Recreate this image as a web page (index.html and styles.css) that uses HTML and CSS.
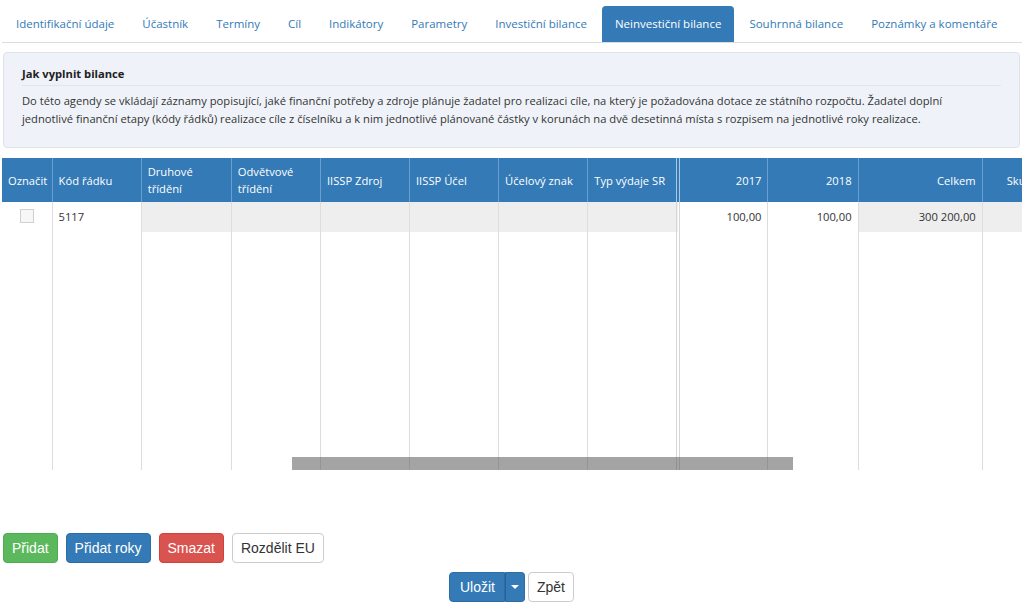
FILE: index.html
```html
<!DOCTYPE html>
<html lang="cs">
<head>
<meta charset="utf-8">
<title>Neinvestiční bilance</title>
<link rel="stylesheet" href="styles.css">
</head>
<body>
<div class="page">
  <ul class="tabs">
    <li><a href="#">Identifikační údaje</a></li>
    <li><a href="#">Účastník</a></li>
    <li><a href="#">Termíny</a></li>
    <li><a href="#">Cíl</a></li>
    <li><a href="#">Indikátory</a></li>
    <li><a href="#">Parametry</a></li>
    <li><a href="#">Investiční bilance</a></li>
    <li class="active"><a href="#">Neinvestiční bilance</a></li>
    <li><a href="#">Souhrnná bilance</a></li>
    <li><a href="#">Poznámky a komentáře</a></li>
  </ul>

  <div class="info">
    <h4 class="info-title">Jak vyplnit bilance</h4>
    <p class="info-text">Do této agendy se vkládají záznamy popisující, jaké finanční potřeby a zdroje plánuje žadatel pro realizaci cíle, na který je požadována dotace ze státního rozpočtu. Žadatel doplní jednotlivé finanční etapy (kódy řádků) realizace cíle z číselníku a k nim jednotlivé plánované částky v korunách na dvě desetinná místa s rozpisem na jednotlivé roky realizace.</p>
  </div>

  <div class="grid-wrap">
    <table class="grid">
      <colgroup>
        <col class="c-check">
        <col class="c-std">
        <col class="c-wide">
        <col class="c-std">
        <col class="c-std">
        <col class="c-std">
        <col class="c-std">
        <col class="c-frozen">
        <col class="c-wide">
        <col class="c-wide">
        <col class="c-total">
        <col class="c-rest">
      </colgroup>
      <thead>
        <tr>
          <th>Označit</th>
          <th>Kód řádku</th>
          <th>Druhové třídění</th>
          <th>Odvětvové třídění</th>
          <th>IISSP Zdroj</th>
          <th>IISSP Účel</th>
          <th>Účelový znak</th>
          <th class="frozen-end">Typ výdaje SR</th>
          <th class="num">2017</th>
          <th class="num">2018</th>
          <th class="num">Celkem</th>
          <th class="last">Skutečnost</th>
        </tr>
      </thead>
      <tbody>
        <tr class="data-row">
          <td class="center"><span class="checkbox"></span></td>
          <td>5117</td>
          <td class="ro"></td>
          <td class="ro"></td>
          <td class="ro"></td>
          <td class="ro"></td>
          <td class="ro"></td>
          <td class="ro frozen-end"></td>
          <td class="num">100,00</td>
          <td class="num">100,00</td>
          <td class="num ro">300 200,00</td>
          <td class="ro"></td>
        </tr>
        <tr class="filler">
          <td></td><td></td><td></td><td></td><td></td><td></td><td></td>
          <td class="frozen-end"></td><td></td><td></td><td></td><td></td>
        </tr>
      </tbody>
    </table>
    <div class="scroll-thumb"></div>
  </div>

  <div class="actions">
    <button class="btn btn-success">Přidat</button>
    <button class="btn btn-primary">Přidat roky</button>
    <button class="btn btn-danger">Smazat</button>
    <button class="btn btn-default">Rozdělit EU</button>
  </div>

  <div class="save-row">
    <div class="btn-group">
      <button class="btn btn-primary btn-main">Uložit</button>
      <button class="btn btn-primary btn-caret"><span class="caret"></span></button>
    </div>
    <button class="btn btn-default">Zpět</button>
  </div>
</div>
</body>
</html>
```
FILE: styles.css
```css
* { box-sizing: border-box; }

html, body {
  margin: 0;
  padding: 0;
  background: #fff;
}

body {
  font-family: "Open Sans", "Segoe UI", Arial, sans-serif;
  font-size: 11.2px;
  color: #333;
}

.page {
  padding: 6px 2px 0 2px;
  width: 1024px;
  overflow: hidden;
}

/* Tabs */
.tabs {
  list-style: none;
  margin: 0;
  padding: 0;
  display: flex;
  border-bottom: 1px solid #dddddd;
  height: 37px;
}
.tabs li {
  margin-right: 2px;
}
.tabs a {
  display: block;
  padding: 10px 13px;
  line-height: 16px;
  font-size: 11.5px;
  color: #337ab7;
  text-decoration: none;
  border-radius: 4px 4px 0 0;
  white-space: nowrap;
}
.tabs li:first-child a {
  padding-left: 14px;
}
.tabs li.active a {
  background: #337ab7;
  color: #fff;
}

/* Info panel */
.info {
  margin: 9px 2px 0 1px;
  background: #eff3f9;
  border: 1px solid #dde3eb;
  border-radius: 4px;
  padding: 12px 18px 19px 18px;
}
.info-title {
  margin: 0;
  font-size: 11.2px;
  font-weight: 700;
  line-height: 17px;
  padding-bottom: 3px;
  border-bottom: 1px solid #e1e6ec;
  color: #222;
}
.info-text {
  margin: 6px 0 0 0;
  line-height: 18px;
  padding-right: 30px;
}

/* Grid */
.grid-wrap {
  position: relative;
  margin-top: 10px;
  overflow: hidden;
  height: 312px;
}
.grid {
  border-collapse: collapse;
  table-layout: fixed;
  width: 1131px;
}
.c-check { width: 50px; }
.c-std { width: 89px; }
.c-frozen { width: 90px; }
.c-wide { width: 90px; }
.c-total { width: 124px; }
.c-rest { width: 150px; }

.grid th {
  background: #337ab7;
  color: #fff;
  font-weight: 400;
  text-align: left;
  vertical-align: middle;
  height: 44px;
  padding: 0 6px;
  line-height: 17px;
  border-right: 1px solid #6b9fd0;
}
.grid th.last {
  padding-left: 24px;
}
.grid th.num,
.grid td.num {
  text-align: right;
}
.grid th.frozen-end {
  border-right: 4px double #a9c7e5;
}
.grid td.frozen-end {
  border-right: 4px double #d6d6d6;
}
.grid td {
  height: 30px;
  padding: 0 6px;
  line-height: 16px;
  border-right: 1px solid #dddddd;
  color: #333;
}
.grid td.ro {
  background: #eeeeee;
}
.grid td.center {
  text-align: center;
}
.grid .filler td {
  height: 238px;
}
.checkbox {
  display: inline-block;
  width: 14px;
  height: 14px;
  border: 1px solid #cfcfcf;
  background: #f7f7f7;
  vertical-align: middle;
  margin-top: -4px;
}

.scroll-thumb {
  position: absolute;
  left: 290px;
  width: 501px;
  top: 299px;
  height: 13px;
  background: rgba(90, 90, 90, 0.55);
}

/* Buttons */
.btn {
  font-family: "Liberation Sans", Arial, sans-serif;
  font-size: 14px;
  height: 30px;
  line-height: 28px;
  padding: 0 8px;
  border: 1px solid transparent;
  border-radius: 4px;
  cursor: pointer;
}
.btn-success { background: #5cb85c; border-color: #4cae4c; color: #fff; }
.btn-primary { background: #337ab7; border-color: #2e6da4; color: #fff; }
.btn-danger  { background: #d9534f; border-color: #d43f3a; color: #fff; }
.btn-default { background: #fff; border-color: #cccccc; color: #333; }

.actions {
  display: flex;
  gap: 8px;
  margin-top: 63px;
  padding-left: 1px;
}

.save-row {
  display: flex;
  justify-content: center;
  gap: 3px;
  margin-top: 9px;
  padding-right: 1px;
}
.btn-group {
  display: flex;
}
.btn-main {
  border-radius: 4px 0 0 4px;
  padding: 0 9px 0 10px;
}
.btn-caret {
  border-radius: 0 4px 4px 0;
  width: 20px;
  padding: 0;
  border-left-color: #28609a;
  display: flex;
  align-items: center;
  justify-content: center;
}
.caret {
  width: 0;
  height: 0;
  border-left: 4px solid transparent;
  border-right: 4px solid transparent;
  border-top: 4px solid #fff;
}
```
